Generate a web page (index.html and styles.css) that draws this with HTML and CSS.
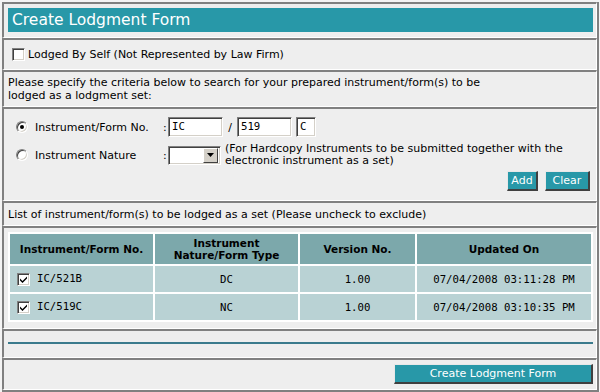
FILE: index.html
```html
<!DOCTYPE html>
<html>
<head>
<meta charset="utf-8">
<title>Create Lodgment Form</title>
<link rel="stylesheet" href="styles.css">
</head>
<body>
<div class="page">
  <div class="frame">
    <section class="row r-title">
      <div class="titlebar">Create Lodgment Form</div>
    </section>

    <section class="row r-self">
      <label class="chk-line"><span class="cb"></span><span>Lodged By Self (Not Represented by Law Firm)</span></label>
    </section>

    <section class="row r-intro">
      <p class="txt">Please specify the criteria below to search for your prepared instrument/form(s) to be<br>lodged as a lodgment set:</p>
    </section>

    <section class="row r-criteria">
      <div class="crit-line l1">
        <span class="radio on"></span>
        <span class="lbl">Instrument/Form No.</span>
        <span class="colon">:</span>
        <span class="inp w54">IC</span>
        <span class="slash">/</span>
        <span class="inp w54">519</span>
        <span class="inp w20">C</span>
      </div>
      <div class="crit-line l2">
        <span class="radio"></span>
        <span class="lbl">Instrument Nature</span>
        <span class="colon">:</span>
        <span class="sel"><span class="sel-btn"><svg width="7" height="4" viewBox="0 0 7 4"><path d="M0 0H7L3.5 4Z" fill="#000"/></svg></span></span>
        <span class="note">(For Hardcopy Instruments to be submitted together with the electronic instrument as a set)</span>
      </div>
      <div class="btns">
        <button class="tbtn add">Add</button>
        <button class="tbtn clear">Clear</button>
      </div>
    </section>

    <section class="row r-list">
      <p class="txt">List of instrument/form(s) to be lodged as a set (Please uncheck to exclude)</p>
    </section>

    <section class="row r-table">
      <table class="grid">
        <colgroup><col class="c1"><col class="c2"><col class="c3"><col class="c4"></colgroup>
        <thead>
          <tr><th>Instrument/Form No.</th><th>Instrument<br>Nature/Form Type</th><th>Version No.</th><th>Updated On</th></tr>
        </thead>
        <tbody>
          <tr>
            <td class="first"><span class="cb checked"><svg width="9" height="9" viewBox="0 0 9 9"><path d="M1 3.5L3.5 6L8 1.5V3.5L3.5 8L1 5.5Z" fill="#000"/></svg></span><span class="code">IC/521B</span></td>
            <td>DC</td><td>1.00</td><td>07/04/2008 03:11:28 PM</td>
          </tr>
          <tr>
            <td class="first"><span class="cb checked"><svg width="9" height="9" viewBox="0 0 9 9"><path d="M1 3.5L3.5 6L8 1.5V3.5L3.5 8L1 5.5Z" fill="#000"/></svg></span><span class="code">IC/519C</span></td>
            <td>NC</td><td>1.00</td><td>07/04/2008 03:10:35 PM</td>
          </tr>
        </tbody>
      </table>
    </section>

    <section class="row r-sep">
      <div class="rule"></div>
    </section>

    <section class="row r-submit">
      <button class="tbtn big">Create Lodgment Form</button>
    </section>
  </div>
</div>
</body>
</html>
```

FILE: styles.css
```css
html, body {
  margin: 0;
  padding: 0;
  background: #f4f4f4;
}
body {
  font-family: "DejaVu Sans", Verdana, sans-serif;
  font-size: 11px;
  color: #000;
}
.page {
  width: 600px;
  height: 392px;
  box-sizing: border-box;
  padding: 2px 1px 0 2px;
}
.frame {
  box-sizing: border-box;
  height: 390px;
  border-right: 2px solid #808080;
  border-bottom: 2px solid #808080;
  display: flex;
  flex-direction: column;
}
.row {
  box-sizing: border-box;
  background: #eeeeee;
  border-style: solid;
  border-width: 2px 1px 1px 2px;
  border-color: #808080 #ffffff #ffffff #808080;
}
.txt {
  margin: 0;
  line-height: 13px;
}

/* title */
.r-title { height: 36px; padding: 4px 3px 0 4px; }
.titlebar {
  height: 24px;
  background: #2898a8;
  color: #fff;
  font-size: 15.5px;
  line-height: 24px;
  padding-left: 4px;
}

/* lodged by self */
.r-self { height: 32px; display: flex; align-items: center; padding-left: 8px; }
.chk-line { display: flex; align-items: center; gap: 3px; }

.cb {
  box-sizing: border-box;
  width: 13px;
  height: 13px;
  background: #fff;
  border: 1px solid;
  border-color: #808080 #ffffff #ffffff #808080;
  box-shadow: inset 1px 1px 0 #404040, inset -1px -1px 0 #d4d0c8;
  display: inline-flex;
  align-items: center;
  justify-content: center;
  flex: none;
}
.cb svg { display: block; }

/* intro */
.r-intro { height: 37px; display: flex; align-items: center; padding-left: 4px; }

/* criteria */
.r-criteria { height: 94px; padding: 8px 6px 0 4px; display: flex; flex-direction: column; }
.crit-line { display: flex; align-items: center; }
.l1 { height: 20px; }
.l2 { height: 24px; margin-top: 6px; }
.radio {
  box-sizing: border-box;
  width: 12px;
  height: 12px;
  border-radius: 50%;
  background: #fff;
  border: 1px solid;
  border-color: #808080 #ffffff #ffffff #808080;
  box-shadow: inset 1px 1px 0 #404040, inset -1px -1px 0 #d4d0c8;
  margin-left: 8px;
  margin-right: 7px;
  flex: none;
  position: relative;
}
.radio.on::after {
  content: "";
  position: absolute;
  left: 3px;
  top: 3px;
  width: 4px;
  height: 4px;
  border-radius: 50%;
  background: #000;
}
.lbl { width: 128px; flex: none; }
.colon { width: 5px; flex: none; }
.inp {
  box-sizing: border-box;
  height: 20px;
  background: #fff;
  border: 1px solid;
  border-color: #808080 #ffffff #ffffff #808080;
  box-shadow: inset 1px 1px 0 #404040, inset -1px -1px 0 #d4d0c8;
  font-family: "DejaVu Sans Mono", "Liberation Mono", monospace;
  font-size: 10.7px;
  line-height: 18px;
  padding-left: 3px;
  flex: none;
}
.w54 { width: 55px; }
.w20 { width: 20px; margin-left: 4px; }
.slash { width: 14px; text-align: center; flex: none; }
.sel {
  box-sizing: border-box;
  width: 53px;
  height: 19px;
  background: #fff;
  border: 1px solid;
  border-color: #808080 #ffffff #ffffff #808080;
  box-shadow: inset 1px 1px 0 #404040, inset -1px -1px 0 #d4d0c8;
  display: flex;
  justify-content: flex-end;
  align-items: center;
  padding-right: 2px;
  flex: none;
}
.sel-btn {
  box-sizing: border-box;
  width: 15px;
  height: 15px;
  background: #d4d0c8;
  border: 1px solid;
  border-color: #ffffff #404040 #404040 #ffffff;
  display: flex;
  align-items: center;
  justify-content: center;
}
.sel-btn svg { display: block; }
.note { margin-left: 4px; line-height: 12px; }

.btns { display: flex; justify-content: flex-end; gap: 7px; margin-top: 4px; }
.tbtn {
  box-sizing: border-box;
  height: 20px;
  margin: 0;
  padding: 0;
  background: #2898a8;
  color: #fff;
  font-family: "DejaVu Sans", Verdana, sans-serif;
  font-size: 11px;
  border-style: solid;
  border-width: 1px 2px 2px 1px;
  border-color: #e8e8e8 #404040 #404040 #e8e8e8;
}
.add { width: 31px; }
.clear { width: 45px; }

/* list */
.r-list { height: 25px; display: flex; align-items: center; padding-left: 4px; }

/* table */
.r-table { height: 103px; padding: 4px 3px 0 4px; }
.grid {
  width: 585px;
  table-layout: fixed;
  border-collapse: separate;
  border-spacing: 2px;
  background: #fff;
}
.c1 { width: 143px; }
.c2 { width: 143px; }
.c3 { width: 115px; }
.c4 { width: 174px; }
.grid th {
  height: 30px;
  padding: 0;
  background: #7ca8ab;
  font-size: 10.5px;
  font-weight: bold;
  line-height: 12px;
  text-align: center;
}
.grid td {
  height: 26px;
  padding: 0;
  background: #b9d2d4;
  font-family: "DejaVu Sans Mono", "Liberation Mono", monospace;
  font-size: 10.7px;
  text-align: center;
}
.grid td.first { text-align: left; padding-left: 7px; }
.grid td.first .cb { vertical-align: -2px; margin-right: 7px; display: inline-flex; }

/* separator */
.r-sep { height: 29px; padding: 11px 3px 0 4px; }
.rule { height: 2px; background: #3a7a8c; }

/* submit */
.r-submit { height: 32px; padding: 4px 3px 0 4px; display: flex; justify-content: flex-end; align-items: flex-start; }
.big { width: 199px; font-size: 11px; }
```
